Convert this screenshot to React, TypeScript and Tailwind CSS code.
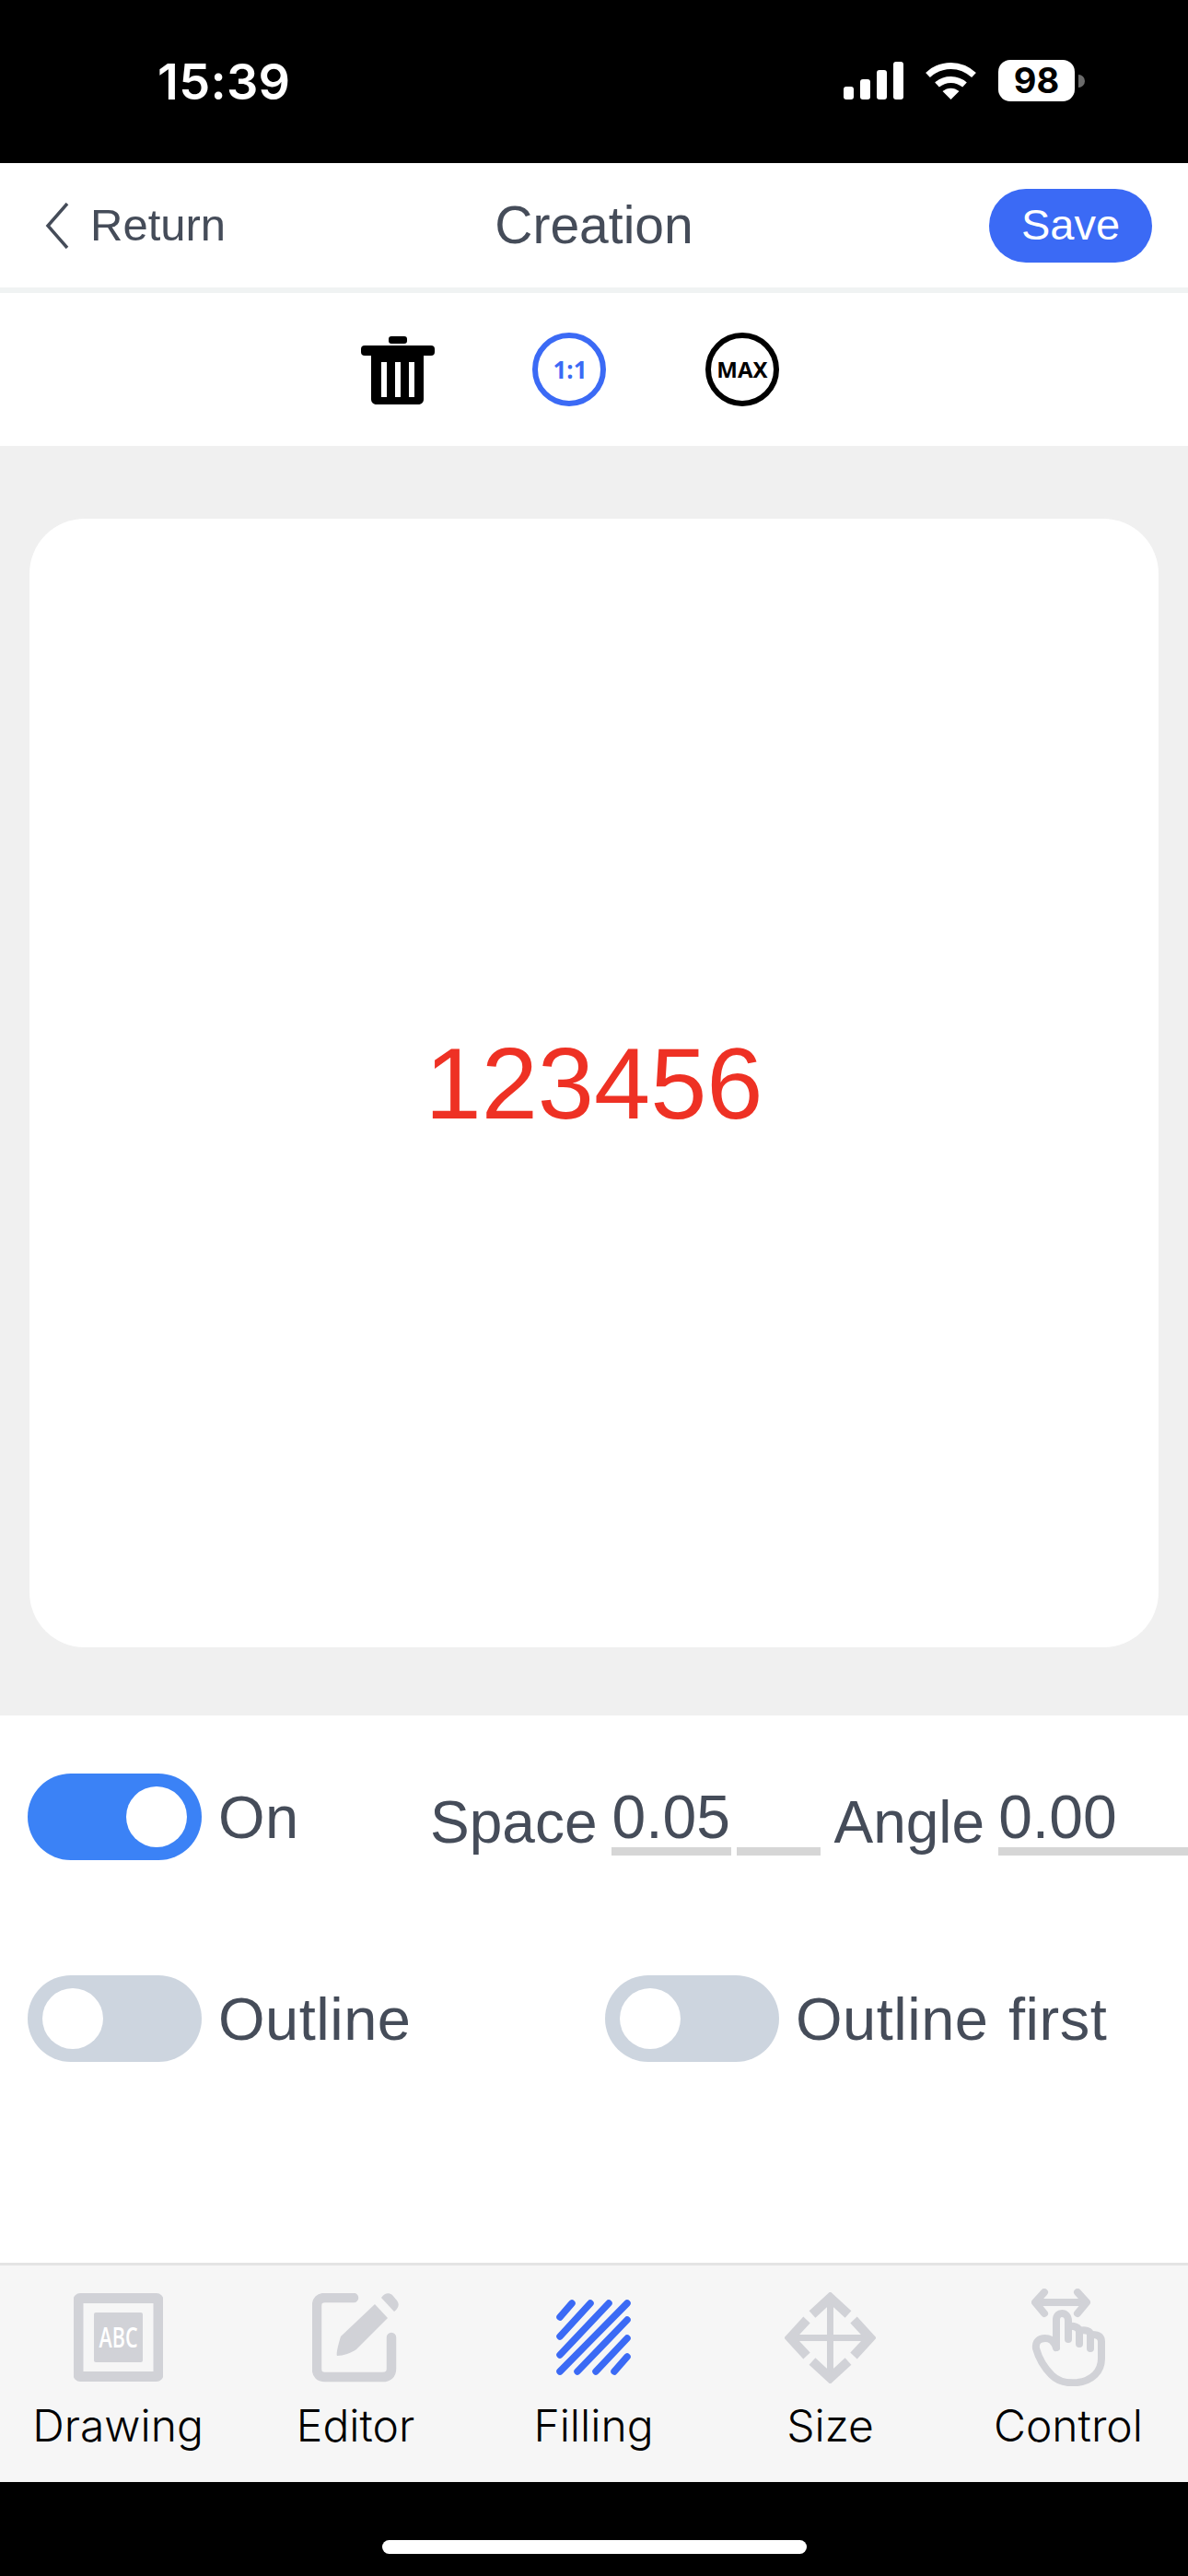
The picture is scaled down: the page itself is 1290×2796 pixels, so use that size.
import React from 'react';

const uiFont = "font-['Liberation_Sans',sans-serif]";
const tabFont = "font-['Inter',sans-serif]";

const Toggle = ({ on }: { on: boolean }) => (
  <div
    className={`flex h-[94px] w-[189px] shrink-0 items-center rounded-full px-4 ${
      on ? 'justify-end bg-[#3b82f6]' : 'justify-start bg-[#cdd5df]'
    }`}
  >
    <div className="h-[66px] w-[66px] rounded-full bg-white" />
  </div>
);

const ToggleField = ({ on, label }: { on: boolean; label: string }) => (
  <div className="flex items-center gap-[18px]">
    <Toggle on={on} />
    <span className="text-[65px] leading-none tracking-[0.5px] text-[#454c59] [word-spacing:3px]">{label}</span>
  </div>
);

const SignalIcon = () => (
  <div className="flex h-[41px] items-end gap-[7px]">
    <div className="h-[14px] w-[11px] rounded-[3px] bg-white" />
    <div className="h-[22px] w-[11px] rounded-[3px] bg-white" />
    <div className="h-[32px] w-[11px] rounded-[3px] bg-white" />
    <div className="h-[41px] w-[11px] rounded-[3px] bg-white" />
  </div>
);

const WifiIcon = () => (
  <svg width="57" height="41" viewBox="0 0 57 41" fill="none">
    <path d="M3.5 14.5C18 1 39 1 53.5 14.5" stroke="#fff" strokeWidth="7" />
    <path d="M13.5 25C22 17.5 35 17.5 43.5 25" stroke="#fff" strokeWidth="7" />
    <path d="M28.5 41L19.5 32C25 27.5 32 27.5 37.5 32Z" fill="#fff" />
  </svg>
);

const TrashIcon = () => (
  <svg width="80" height="74" viewBox="0 0 80 74">
    <rect x="30" y="0" width="20" height="8" rx="3" fill="#000" />
    <rect x="0" y="10" width="80" height="11" rx="4" fill="#000" />
    <path d="M11 20H68V68C68 71.5 66 74 62 74H17C13 74 11 71.5 11 68Z" fill="#000" />
    <rect x="22" y="28" width="6" height="38" fill="#fff" />
    <rect x="37" y="28" width="6" height="38" fill="#fff" />
    <rect x="52" y="28" width="6" height="38" fill="#fff" />
  </svg>
);

const DrawingIcon = () => (
  <svg width="97" height="96" viewBox="0 0 97 96">
    <rect x="5" y="5.5" width="87" height="85" rx="2" fill="none" stroke="#d1d2d7" strokeWidth="11" />
    <rect x="22" y="21" width="53" height="54" rx="2" fill="#d1d2d7" />
    <text
      x="48.5"
      y="59"
      textAnchor="middle"
      fill="#ffffff"
      fontSize="30"
      fontWeight="600"
      fontFamily="'Open Sans', sans-serif"
      textLength="42"
      lengthAdjust="spacingAndGlyphs"
    >
      ABC
    </text>
  </svg>
);

const EditorIcon = () => (
  <svg width="94" height="97" viewBox="0 0 94 97">
    <path
      d="M45 5H14Q5 5 5 14V82Q5 91 14 91H76Q86 91 86 82V48"
      fill="none"
      stroke="#d1d2d7"
      strokeWidth="10.5"
      strokeLinecap="round"
    />
    <path d="M68 12L82 27L48 61C42 65 34 68 27 68C26 67 27 60 31 47Z" fill="#d1d2d7" />
    <path d="M75 5C78 0 83 -1 87 2L92 8C95 12 94 16 89 20Z" fill="#d1d2d7" />
  </svg>
);

const FillingIcon = () => (
  <svg width="81" height="82" viewBox="0 0 81 82" fill="none" stroke="#3b6af5" strokeWidth="7.5" strokeLinecap="round">
    <path d="M4 19L17 4" />
    <path d="M4 40L37 4" />
    <path d="M4 60L57 4" />
    <path d="M4 78L77 4" />
    <path d="M23 78L77 22" />
    <path d="M43 78L77 42" />
    <path d="M63 78L77 62" />
  </svg>
);

const SizeIcon = () => (
  <svg width="99" height="99" viewBox="0 0 99 99" fill="none" stroke="#d1d2d7" strokeWidth="8">
    <path d="M49.5 6V93M6 49.5H93" strokeWidth="7" />
    <path d="M30 24L49.5 6L69 24" strokeWidth="10" />
    <path d="M30 75L49.5 93L69 75" strokeWidth="10" />
    <path d="M24 30L6 49.5L24 69" strokeWidth="10" />
    <path d="M75 30L93 49.5L75 69" strokeWidth="10" />
  </svg>
);

const ControlIcon = () => (
  <svg width="80" height="106" viewBox="0 0 80 106" fill="none" stroke="#d1d2d7" strokeWidth="8" strokeLinecap="round" strokeLinejoin="round">
    <path d="M5 15H58" />
    <path d="M14 4L4 15L14 27" />
    <path d="M50 4L60 15L50 27" />
    <path d="M27 64C24 56 20 54 15 54C8 54 4 58 5 65C8 76 14 86 22 94C30 102 40 103 50 102C66 100 76 90 76 76V58C76 52 72 50 66 50" />
    <path d="M27 64V34C27 29 30 27 33 27C37 27 40 30 40 35V55" />
    <path d="M40 41C46 40 52 42 52 47V60" />
    <path d="M52 46C58 44 64 46 64 50V65" />
  </svg>
);

const tabs = [
  { label: 'Drawing', icon: <DrawingIcon />, center: 'w-[256px]' },
  { label: 'Editor', icon: <EditorIcon />, center: 'w-[260px]' },
  { label: 'Filling', icon: <FillingIcon />, center: 'w-[257px]' },
  { label: 'Size', icon: <SizeIcon />, center: 'w-[257px]' },
  { label: 'Control', icon: <ControlIcon />, center: 'w-[260px]' },
];

export default function App() {
  return (
    <div className={`flex h-[2796px] w-[1290px] flex-col overflow-hidden bg-white ${uiFont}`}>
      {/* status bar */}
      <div className="flex h-[177px] shrink-0 items-start justify-between bg-black pl-[171px] pr-[112px] pt-[64px]">
        <span className="mt-[2px] font-['Inter',sans-serif] text-[54px] font-semibold leading-[46px] tracking-[0.3px] text-white">15:39</span>
        <div className="flex items-center pt-[1px]">
          <SignalIcon />
          <div className="ml-[23px]">
            <WifiIcon />
          </div>
          <div className="ml-[23px] flex h-[45px] w-[83px] items-center justify-center rounded-[13px] bg-white font-['Inter',sans-serif] text-[38px] font-bold text-black">
            98
          </div>
          <div className="ml-[4px] h-[14px] w-[7px] rounded-r-full bg-[#6b6b6b]" />
        </div>
      </div>

      {/* nav */}
      <div className="grid h-[135px] shrink-0 grid-cols-3 items-center">
        <div className="flex items-center pl-[49px]">
          <svg width="26" height="50" viewBox="0 0 26 50" fill="none" stroke="#454c59" strokeWidth="3.5">
            <path d="M24 1L3 25L24 49" />
          </svg>
          <span className="ml-[23px] text-[49px] text-[#454c59]">Return</span>
        </div>
        <span className="text-center text-[57px] text-[#454c59]">Creation</span>
        <div className="flex justify-end pr-[39px]">
          <div className="flex h-[80px] w-[177px] items-center justify-center rounded-full bg-[#3b6af5] text-[47px] text-white">
            Save
          </div>
        </div>
      </div>
      <div className="h-[6px] shrink-0 bg-[#f0f3f3]" />

      {/* toolbar */}
      <div className="flex h-[166px] shrink-0 items-center pl-[392px]">
        <div className="pt-[2px]">
          <TrashIcon />
        </div>
        <div className="ml-[106px] flex h-[80px] w-[80px] items-center justify-center rounded-full border-[6px] border-[#3b6af5] pl-[2px] font-['Noto_Sans',sans-serif] text-[26px] font-bold text-[#3b6af5]">
          1:1
        </div>
        <div className="ml-[108px] flex h-[80px] w-[80px] items-center justify-center rounded-full border-[6px] border-black font-['Noto_Sans',sans-serif] text-[24px] font-bold text-black">
          MAX
        </div>
      </div>

      {/* canvas */}
      <div className="flex h-[1378px] shrink-0 items-start justify-center bg-[#f0f0f0] px-[32px] pt-[79px]">
        <div className="flex h-[1225px] w-[1226px] items-center justify-center rounded-[60px] bg-white">
          <span className="text-[110px] leading-none text-[#ee3124]">123456</span>
        </div>
      </div>

      {/* filling controls */}
      <div className="flex h-[594px] shrink-0 flex-col pl-[30px] pt-[63px]">
        <div className="flex items-start">
          <div className="w-[437px] shrink-0">
            <ToggleField on label="On" />
          </div>
          <div className="flex flex-1 items-start text-[64px] leading-none text-[#454c59]">
            <span className="mt-[21px]">Space</span>
            <div className="ml-[16px] h-[89px] w-[130px] shrink-0 border-b-[9px] border-[#d6d6d6] pt-[14px] text-[66px]">0.05</div>
            <div className="ml-[6px] h-[89px] w-[91px] shrink-0 border-b-[9px] border-[#d6d6d6]" />
            <span className="ml-[14px] mt-[21px]">Angle</span>
            <div className="ml-[15px] h-[89px] flex-1 border-b-[9px] border-[#d6d6d6] pt-[14px] text-[66px]">0.00</div>
          </div>
        </div>
        <div className="mt-[125px] flex items-start">
          <div className="w-[627px] shrink-0">
            <ToggleField on={false} label="Outline" />
          </div>
          <ToggleField on={false} label="Outline first" />
        </div>
      </div>

      {/* bottom tabs */}
      <div className={`flex h-[238px] shrink-0 border-t-[3px] border-[#e4e4e4] bg-[#f6f6f6] ${tabFont}`}>
        {tabs.map((tab) => (
          <div key={tab.label} className={`flex ${tab.center} shrink-0 flex-col items-center`}>
            <div className="flex h-[136px] items-center justify-center pt-[20px]">{tab.icon}</div>
            <span className="mt-[10px] text-[48px] font-light leading-[56px] text-black">{tab.label}</span>
          </div>
        ))}
      </div>

      {/* home indicator */}
      <div className="flex flex-1 justify-center bg-black pt-[63px]">
        <div className="h-[15px] w-[461px] rounded-full bg-white" />
      </div>
    </div>
  );
}
